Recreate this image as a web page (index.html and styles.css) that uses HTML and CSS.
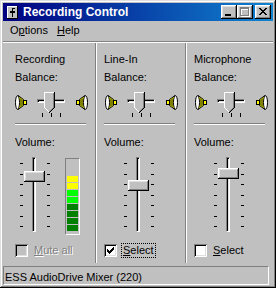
FILE: index.html
```html
<!DOCTYPE html>
<html>
<head>
<meta charset="utf-8">
<title>Recording Control</title>
<link rel="stylesheet" href="styles.css">
</head>
<body>
<div class="window">
  <div class="titlebar">
    <svg class="app-icon" width="11" height="13" viewBox="0 0 11 13" shape-rendering="crispEdges">
      <rect x="0" y="0" width="11" height="13" fill="#c0c0c0"/>
      <rect x="0" y="0" width="11" height="1" fill="#fff"/>
      <rect x="0" y="0" width="1" height="13" fill="#fff"/>
      <rect x="0" y="12" width="11" height="1" fill="#000"/>
      <rect x="10" y="0" width="1" height="13" fill="#000"/>
      <rect x="5" y="2" width="1" height="9" fill="#000"/>
      <rect x="6" y="2" width="2" height="1" fill="#000"/>
      <rect x="3" y="5" width="5" height="2" fill="#000"/>
    </svg>
    <span class="title">Recording Control</span>
    <div class="caption-buttons">
      <div class="cbtn">
        <svg width="16" height="14" viewBox="0 0 16 14" shape-rendering="crispEdges"><rect x="4" y="9" width="6" height="2" fill="#000"/></svg>
      </div>
      <div class="cbtn">
        <svg width="16" height="14" viewBox="0 0 16 14" shape-rendering="crispEdges">
          <g fill="#fff"><rect x="4" y="3" width="9" height="2"/><rect x="4" y="3" width="1" height="9"/><rect x="12" y="3" width="1" height="9"/><rect x="4" y="11" width="9" height="1"/></g>
          <g fill="#808080"><rect x="3" y="2" width="9" height="2"/><rect x="3" y="2" width="1" height="9"/><rect x="11" y="2" width="1" height="9"/><rect x="3" y="10" width="9" height="1"/></g>
        </svg>
      </div>
      <div class="cbtn cbtn-close">
        <svg width="16" height="14" viewBox="0 0 16 14" shape-rendering="crispEdges" fill="#000">
          <rect x="4" y="3" width="2" height="1"/><rect x="10" y="3" width="2" height="1"/>
          <rect x="5" y="4" width="2" height="1"/><rect x="9" y="4" width="2" height="1"/>
          <rect x="6" y="5" width="4" height="1"/>
          <rect x="7" y="6" width="2" height="1"/>
          <rect x="6" y="7" width="4" height="1"/>
          <rect x="5" y="8" width="2" height="1"/><rect x="9" y="8" width="2" height="1"/>
          <rect x="4" y="9" width="2" height="1"/><rect x="10" y="9" width="2" height="1"/>
        </svg>
      </div>
    </div>
  </div>

  <div class="menubar">
    <span class="menu-item">O<u>p</u>tions</span>
    <span class="menu-item"><u>H</u>elp</span>
  </div>

  <div class="mixer">
    <div class="channel channel-first">
      <div class="ch-name">Recording</div>
      <div class="ch-label">Balance:</div>
      <div class="balance">
        <svg class="spk" width="12" height="15" viewBox="0 0 12 15"><use href="#speaker"/></svg>
        <div class="hslider">
          <div class="hslider-body">
            <div class="htrack"></div>
            <svg class="hthumb" width="11" height="21" viewBox="0 0 11 21"><use href="#hthumb"/></svg>
          </div>
          <div class="hticks"><i></i><i></i><i></i></div>
        </div>
        <svg class="spk spk-r" width="12" height="15" viewBox="0 0 12 15"><use href="#speaker"/></svg>
      </div>
      <div class="etch"></div>
      <div class="ch-label vol-label">Volume:</div>
      <div class="volume">
        <div class="vslider">
          <div class="vticks"><i></i><i></i><i></i><i></i><i></i><i></i><i></i></div>
          <div class="vbody"><div class="vtrack"></div><div class="vthumb" style="top:14px"></div></div>
          <div class="vticks"><i></i><i></i><i></i><i></i><i></i><i></i><i></i></div>
        </div>
        <div class="meter">
          <div class="seg seg-y"></div><div class="seg seg-y"></div>
          <div class="seg seg-l"></div><div class="seg seg-l"></div>
          <div class="seg seg-g"></div><div class="seg seg-g"></div>
          <div class="seg seg-g"></div><div class="seg seg-g"></div>
        </div>
      </div>
      <div class="check-row">
        <span class="checkbox checkbox-disabled"></span>
        <span class="check-label check-label-disabled"><u>M</u>ute all</span>
      </div>
    </div>

    <div class="vsep"></div>

    <div class="channel channel-mid">
      <div class="ch-name">Line-In</div>
      <div class="ch-label">Balance:</div>
      <div class="balance balance-shift">
        <svg class="spk" width="12" height="15" viewBox="0 0 12 15"><use href="#speaker"/></svg>
        <div class="hslider">
          <div class="hslider-body">
            <div class="htrack"></div>
            <svg class="hthumb" width="11" height="21" viewBox="0 0 11 21"><use href="#hthumb"/></svg>
          </div>
          <div class="hticks"><i></i><i></i><i></i></div>
        </div>
        <svg class="spk spk-r" width="12" height="15" viewBox="0 0 12 15"><use href="#speaker"/></svg>
      </div>
      <div class="etch"></div>
      <div class="ch-label vol-label">Volume:</div>
      <div class="volume">
        <div class="vslider vslider-solo">
          <div class="vticks"><i></i><i></i><i></i><i></i><i></i><i></i><i></i></div>
          <div class="vbody"><div class="vtrack"></div><div class="vthumb" style="top:23px"></div></div>
          <div class="vticks"><i></i><i></i><i></i><i></i><i></i><i></i><i></i></div>
        </div>
      </div>
      <div class="check-row">
        <span class="checkbox">
          <svg width="13" height="13" viewBox="0 0 13 13" shape-rendering="crispEdges" fill="#000">
            <rect x="9" y="3" width="1" height="3"/><rect x="8" y="4" width="1" height="3"/>
            <rect x="7" y="5" width="1" height="3"/><rect x="6" y="6" width="1" height="3"/>
            <rect x="5" y="7" width="1" height="3"/><rect x="4" y="6" width="1" height="3"/>
            <rect x="3" y="5" width="1" height="3"/>
          </svg>
        </span>
        <span class="check-label check-label-focus"><u>S</u>elect</span>
      </div>
    </div>

    <div class="vsep"></div>

    <div class="channel channel-last">
      <div class="ch-name">Microphone</div>
      <div class="ch-label">Balance:</div>
      <div class="balance balance-shift">
        <svg class="spk" width="12" height="15" viewBox="0 0 12 15"><use href="#speaker"/></svg>
        <div class="hslider">
          <div class="hslider-body">
            <div class="htrack"></div>
            <svg class="hthumb" width="11" height="21" viewBox="0 0 11 21"><use href="#hthumb"/></svg>
          </div>
          <div class="hticks"><i></i><i></i><i></i></div>
        </div>
        <svg class="spk spk-r" width="12" height="15" viewBox="0 0 12 15"><use href="#speaker"/></svg>
      </div>
      <div class="etch"></div>
      <div class="ch-label vol-label">Volume:</div>
      <div class="volume">
        <div class="vslider vslider-solo">
          <div class="vticks"><i></i><i></i><i></i><i></i><i></i><i></i><i></i></div>
          <div class="vbody"><div class="vtrack"></div><div class="vthumb" style="top:11px"></div></div>
          <div class="vticks"><i></i><i></i><i></i><i></i><i></i><i></i><i></i></div>
        </div>
      </div>
      <div class="check-row">
        <span class="checkbox"></span>
        <span class="check-label"><u>S</u>elect</span>
      </div>
    </div>
  </div>

  <div class="status">
    <div class="status-panel">ESS AudioDrive Mixer (220)</div>
  </div>
</div>

<svg class="defs" width="0" height="0">
  <defs>
    <g id="speaker">
      <polygon points="3,0.5 8.5,4.5 8.5,10.5 3,14.5" fill="#ffff00" stroke="#000" stroke-width="1"/>
      <polygon points="5,3 8.5,5 8.5,10 5,12" fill="#808000"/>
      <rect x="8.5" y="5.5" width="3" height="4" fill="#ffff00" stroke="#000" stroke-width="1"/>
      <ellipse cx="2.5" cy="7.5" rx="2" ry="6.8" fill="#fff" stroke="#000" stroke-width="1"/>
    </g>
    <g id="hthumb" shape-rendering="crispEdges">
      <polygon points="0,0 11,0 11,16 5.5,21 0,16" fill="#c0c0c0"/>
      <rect x="0" y="0" width="10" height="1" fill="#fff"/>
      <rect x="0" y="0" width="1" height="16" fill="#fff"/>
      <rect x="10" y="0" width="1" height="16" fill="#000"/>
      <rect x="9" y="1" width="1" height="15" fill="#808080"/>
      <rect x="1" y="16" width="1" height="1" fill="#fff"/>
      <rect x="2" y="17" width="1" height="1" fill="#fff"/>
      <rect x="3" y="18" width="1" height="1" fill="#fff"/>
      <rect x="4" y="19" width="1" height="1" fill="#fff"/>
      <rect x="9" y="16" width="1" height="1" fill="#000"/>
      <rect x="8" y="17" width="1" height="1" fill="#000"/>
      <rect x="7" y="18" width="1" height="1" fill="#000"/>
      <rect x="6" y="19" width="1" height="1" fill="#000"/>
      <rect x="5" y="20" width="1" height="1" fill="#000"/>
      <rect x="8" y="16" width="1" height="1" fill="#808080"/>
      <rect x="7" y="17" width="1" height="1" fill="#808080"/>
      <rect x="6" y="18" width="1" height="1" fill="#808080"/>
      <rect x="5" y="19" width="1" height="1" fill="#808080"/>
    </g>
  </defs>
</svg>
</body>
</html>
```

FILE: styles.css
```css
* { box-sizing: border-box; }

html, body {
  margin: 0;
  padding: 0;
}

body {
  width: 276px;
  height: 288px;
  overflow: hidden;
  background: #c0c0c0;
  font-family: "Liberation Sans", Arial, sans-serif;
  font-size: 11px;
  line-height: 13px;
  color: #000;
}

.defs { position: absolute; width: 0; height: 0; }

.window {
  width: 276px;
  height: 288px;
  padding: 3px;
  background: #c0c0c0;
  box-shadow: inset -1px -1px #000, inset 1px 1px #dfdfdf, inset -2px -2px #808080, inset 2px 2px #fff;
  display: flex;
  flex-direction: column;
}

/* title bar */
.titlebar {
  flex: none;
  height: 18px;
  display: flex;
  align-items: center;
  padding: 0 2px 0 4px;
  background: linear-gradient(to right, #000080, #1084d0);
}

.app-icon { display: block; flex: none; }

.title {
  flex: 1;
  margin-left: 5px;
  color: #fff;
  font-weight: bold;
  font-size: 12px;
  line-height: 14px;
  white-space: nowrap;
}

.caption-buttons { display: flex; }

.cbtn {
  width: 16px;
  height: 14px;
  background: #c0c0c0;
  box-shadow: inset -1px -1px #000, inset 1px 1px #fff, inset -2px -2px #808080, inset 2px 2px #dfdfdf;
}

.cbtn svg { display: block; }
.cbtn-close { margin-left: 2px; }

/* menu */
.menubar {
  flex: none;
  height: 22px;
  display: flex;
  gap: 9px;
  padding: 3px 0 0 7px;
  box-shadow: inset 0 -1px #fff, inset 0 -2px #808080;
}

.menu-item { white-space: nowrap; }

/* channels */
.mixer {
  flex: none;
  height: 220px;
  display: flex;
}

.vsep {
  width: 2px;
  border-left: 1px solid #808080;
  border-right: 1px solid #fff;
}

.channel {
  display: flex;
  flex-direction: column;
  padding-top: 10px;
}

.channel-first { width: 92px; padding-left: 12px; }
.channel-mid { width: 88px; padding-left: 7px; }
.channel-last { flex: 1; padding-left: 7px; }

.ch-name, .ch-label { height: 13px; white-space: nowrap; }
.ch-label { margin-top: 5px; }

.balance {
  display: flex;
  align-items: flex-start;
  height: 26px;
  margin-top: 8px;
}

.balance-shift { margin-left: 1px; }

.spk { display: block; flex: none; margin-top: 3px; }
.spk-r { margin-left: 11px; transform: scaleX(-1); }

.hslider {
  flex: none;
  width: 28px;
  margin-left: 10px;
  display: flex;
  flex-direction: column;
}

.hslider-body {
  position: relative;
  height: 21px;
}

.htrack {
  position: absolute;
  left: 0;
  right: 0;
  top: 7px;
  height: 4px;
  border: 1px solid;
  border-color: #808080 #fff #fff #808080;
  box-shadow: inset 1px 1px #000, inset -1px -1px #dfdfdf;
}

.hthumb { position: absolute; left: 7px; top: 0; display: block; }

.hticks {
  display: flex;
  justify-content: space-between;
  padding: 0 4px 0 5px;
  height: 4px;
}

.hticks i { display: block; width: 1px; height: 4px; background: #000; }

.etch {
  width: 71px;
  height: 2px;
  margin-top: 5px;
  border-top: 1px solid #808080;
  border-bottom: 1px solid #fff;
}

.vol-label { margin-top: 11px; }

.volume {
  display: flex;
  align-items: flex-start;
  height: 78px;
  margin-top: 8px;
}

.vslider {
  flex: none;
  display: flex;
  height: 75px;
  margin-left: 5px;
}

.vslider-solo { margin-left: 20px; }

.vticks {
  width: 3px;
  display: flex;
  flex-direction: column;
  justify-content: space-between;
  padding: 6px 0 5px;
}

.vticks i { display: block; width: 3px; height: 1px; background: #000; }

.vbody {
  position: relative;
  width: 22px;
  margin: 0 1px;
}

.vtrack {
  position: absolute;
  left: 8px;
  top: 0;
  bottom: 0;
  width: 4px;
  border: 1px solid;
  border-color: #808080 #fff #fff #808080;
  box-shadow: inset 1px 1px #000, inset -1px -1px #dfdfdf;
}

.vthumb {
  position: absolute;
  left: 0;
  width: 21px;
  height: 11px;
  background: #c0c0c0;
  box-shadow: inset -1px -1px #000, inset 1px 1px #fff, inset -2px -2px #808080, inset 2px 2px #dfdfdf;
}

.meter {
  flex: none;
  width: 15px;
  height: 77px;
  margin: 1px 0 0 15px;
  border: 1px solid;
  border-color: #808080 #fff #fff #808080;
  display: flex;
  flex-direction: column;
  justify-content: flex-end;
  gap: 1px;
  padding: 0 1px 3px;
}

.seg { flex: none; height: 6px; }
.seg-y { background: #ffff00; }
.seg-l { background: #00ff00; }
.seg-g { background: #008000; }

/* checkboxes */
.check-row {
  display: flex;
  align-items: center;
  height: 15px;
  margin-top: 8px;
}

.checkbox {
  flex: none;
  width: 13px;
  height: 13px;
  background: #fff;
  box-shadow: inset 1px 1px #808080, inset -1px -1px #fff, inset 2px 2px #000, inset -2px -2px #dfdfdf;
}

.checkbox svg { display: block; }
.checkbox-disabled { background: #c0c0c0; }

.check-label {
  height: 15px;
  margin-left: 4px;
  padding: 0 1px;
  border: 1px dotted transparent;
  white-space: nowrap;
}

.check-label-focus { border-color: #000; }

.check-label-disabled {
  color: #808080;
  text-shadow: 1px 1px 0 #fff;
}

/* status bar */
.status {
  flex: 1;
  padding-top: 3px;
}

.status-panel {
  width: 266px;
  height: 19px;
  border: 1px solid;
  border-color: #808080 #fff #fff #808080;
  padding: 4px 0 0 1px;
  white-space: nowrap;
}
```
